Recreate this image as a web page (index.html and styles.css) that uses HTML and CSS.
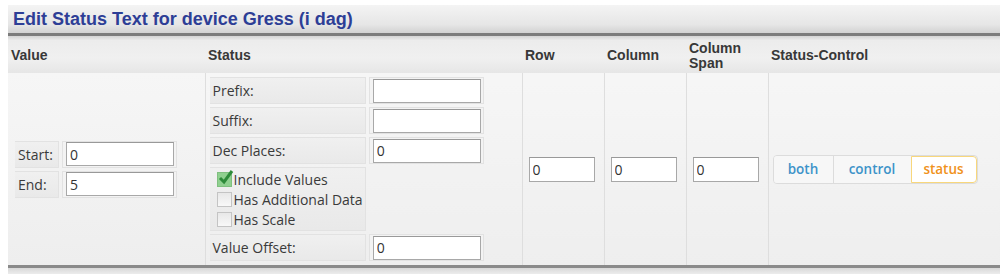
FILE: index.html
```html
<!DOCTYPE html>
<html>
<head>
  <title>Edit Status Text</title>
  <link rel="stylesheet" href="styles.css">
</head>
<body>
  <div class="panel">
    <div class="panel-title">Edit Status Text for device Gress (i dag)</div>

    <table class="grid">
      <colgroup>
        <col class="col-value">
        <col class="col-status">
        <col class="col-num">
        <col class="col-num">
        <col class="col-num">
        <col>
      </colgroup>
      <thead>
        <tr>
          <th>Value</th>
          <th>Status</th>
          <th>Row</th>
          <th>Column</th>
          <th>Column<br>Span</th>
          <th>Status-Control</th>
        </tr>
      </thead>
      <tbody>
        <tr>
          <td>
            <table class="form value-form">
              <tr>
                <td class="label short">Start:</td>
                <td class="field"><input type="text" value="0"></td>
              </tr>
              <tr>
                <td class="label short">End:</td>
                <td class="field"><input type="text" value="5"></td>
              </tr>
            </table>
          </td>
          <td>
            <table class="form">
              <tr>
                <td class="label wide">Prefix:</td>
                <td class="field"><input type="text" value=""></td>
              </tr>
              <tr>
                <td class="label wide">Suffix:</td>
                <td class="field"><input type="text" value=""></td>
              </tr>
              <tr>
                <td class="label wide">Dec Places:</td>
                <td class="field"><input type="text" value="0"></td>
              </tr>
              <tr>
                <td class="label wide checks">
                  <div class="check"><span class="box on"><svg width="18" height="18" viewBox="0 0 18 18"><path d="M3 9 L7 13 L15 2" fill="none" stroke="#2e8b3a" stroke-width="3"/></svg></span>Include Values</div>
                  <div class="check"><span class="box"></span>Has Additional Data</div>
                  <div class="check"><span class="box"></span>Has Scale</div>
                </td>
                <td></td>
              </tr>
              <tr>
                <td class="label wide">Value Offset:</td>
                <td class="field"><input type="text" value="0"></td>
              </tr>
            </table>
          </td>
          <td class="num"><input class="small" type="text" value="0"></td>
          <td class="num"><input class="small" type="text" value="0"></td>
          <td class="num"><input class="small" type="text" value="0"></td>
          <td>
            <div class="toggle">
              <span class="opt">both</span>
              <span class="opt">control</span>
              <span class="opt active">status</span>
            </div>
          </td>
        </tr>
      </tbody>
    </table>
    <div class="panel-foot"></div>
  </div>
</body>
</html>
```

FILE: styles.css
```css
body {
  margin: 5px 0 0 8px;
  font-family: "Liberation Sans", Arial, sans-serif;
  background: #fff;
}

.panel-title {
  height: 28px;
  line-height: 29px;
  padding-left: 5px;
  font-size: 18px;
  font-weight: bold;
  color: #2d3e96;
  background: linear-gradient(#f4f4f4, #e6e6e6 70%, #d2d2d2);
  border-bottom: 3px solid #7c7c7c;
}

.grid {
  width: 100%;
  table-layout: fixed;
  border-collapse: collapse;
}

.col-value {
  width: 197px;
}

.col-status {
  width: 317px;
}

.col-num {
  width: 82px;
}

.grid th {
  height: 35px;
  padding: 2px 3px 0;
  text-align: left;
  font-size: 14px;
  line-height: 15px;
  color: #383838;
  background: linear-gradient(#d4d4d4, #ececec 12%, #f0f0f0 60%, #e6e6e6);
}

.grid td {
  height: 192px;
  padding: 0;
  vertical-align: middle;
  border-left: 1px solid #dedede;
  background: linear-gradient(#f6f6f6, #eeeeee);
}

.grid td:first-child {
  border-left: none;
}

.grid td.num {
  padding-left: 6px;
}

.form {
  border-spacing: 3px;
  margin-left: 1px;
}

.value-form {
  margin-left: 4px;
}

.form td {
  height: auto;
  border: none;
  background: none;
}

.form .label {
  height: 25px;
  padding: 0 3px;
  font-family: "Open Sans", sans-serif;
  font-size: 14px;
  color: #3a3a3a;
  border: 1px solid #e2e2e2;
  background: linear-gradient(#f0f0f0, #e9e9e9);
}

.form .short {
  width: 37px;
}

.form .wide {
  width: 149px;
}

.form .field {
  padding: 0 2px 0 3px;
  border: 1px solid #e2e2e2;
  background: #f3f3f3;
}

.form td.checks {
  width: 146px;
  height: auto;
  padding: 1px 2px 1px 7px;
}

.check {
  display: flex;
  align-items: center;
  height: 20px;
  font-size: 14px;
  white-space: nowrap;
}

.box {
  position: relative;
  width: 13px;
  height: 13px;
  margin-right: 2px;
  border: 1px solid #c4c4c4;
  background: linear-gradient(#e8e8e8, #f8f8f8);
}

.box.on {
  border-color: #7fbf7f;
  background: #8fd08f;
}

.box svg {
  position: absolute;
  left: -1px;
  top: -4px;
}

input {
  display: block;
  width: 108px;
  height: 24px;
  box-sizing: border-box;
  padding: 0 3px;
  font-family: "Open Sans", sans-serif;
  font-size: 14px;
  color: #333;
  border: 1px solid #a8a8a8;
  border-top-color: #999;
  background: #fff;
  outline: none;
}

input.small {
  width: 66px;
  height: 25px;
}

.toggle {
  display: flex;
  margin-left: 4px;
  width: 205px;
  height: 29px;
  border: 1px solid #dcdcdc;
  border-radius: 4px;
  box-sizing: border-box;
  overflow: hidden;
}

.opt {
  display: flex;
  align-items: center;
  justify-content: center;
  font-family: "Open Sans", sans-serif;
  font-size: 13.5px;
  font-weight: 600;
  color: #3d93c9;
  background: #f7f7f7;
  border-left: 1px solid #dcdcdc;
}

.opt:nth-child(1) {
  width: 59px;
  border-left: none;
}

.opt:nth-child(2) {
  width: 77px;
}

.opt.active {
  flex: 1;
  color: #f0921c;
  background: #fff;
  border: 1px solid #f8d77c;
  border-radius: 0 4px 4px 0;
}

.panel-foot {
  height: 6px;
  border-top: 3px solid #8a8a8a;
  background: linear-gradient(#d8d8d8, #ececec);
}
```
